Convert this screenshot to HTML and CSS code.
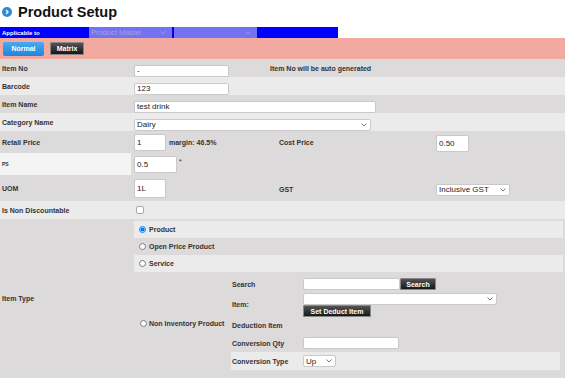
FILE: index.html
```html
<!DOCTYPE html>
<html lang="en">

<head>
    <meta charset="UTF-8">
    <title>Product Setup</title>
    <link rel="stylesheet" href="styles.css">
</head>

<body>
    <div class="page">
        <!-- title -->
        <h1 class="title">
            <svg class="title-icon" width="10" height="10" viewBox="0 0 10 10">
                <circle cx="5" cy="5" r="5" fill="#2d8ad6" />
                <path d="M4 3 L6 5 L4 7" fill="none" stroke="#fff" stroke-width="1.3" />
            </svg>
            Product Setup
        </h1>

        <!-- applicable bar -->
        <div class="applicable">
            <span class="applicable-label">Applicable to</span>
            <span class="select-wrap">
                <select class="app-select">
                    <option>Product Master</option>
                </select>
                <svg class="chevron light-chevron" width="6" height="4" viewBox="0 0 6 4"><path d="M0.5 0.5 L3 3 L5.5 0.5" fill="none" stroke="currentColor" stroke-width="0.8" /></svg>
            </span>
            <span class="select-wrap">
                <select class="app-select">
                    <option></option>
                </select>
                <svg class="chevron light-chevron" width="6" height="4" viewBox="0 0 6 4"><path d="M0.5 0.5 L3 3 L5.5 0.5" fill="none" stroke="currentColor" stroke-width="0.8" /></svg>
            </span>
        </div>

        <div class="tabs">
            <button class="btn btn-blue">Normal</button>
            <button class="btn btn-dark">Matrix</button>
        </div>

        <div class="form">
            <div class="row dark">
                <div class="label">Item No</div>
                <div class="value"><input class="field w95" value="-"></div>
                <div class="label note">Item No will be auto generated</div>
            </div>
            <div class="row light">
                <div class="label">Barcode</div>
                <div class="value"><input class="field w95" value="123"></div>
            </div>
            <div class="row dark">
                <div class="label">Item Name</div>
                <div class="value"><input class="field w242" value="test drink"></div>
            </div>
            <div class="row light">
                <div class="label">Category Name</div>
                <div class="value">
                    <span class="select-wrap">
                        <select class="field w237">
                            <option>Dairy</option>
                        </select>
                        <svg class="chevron" width="6" height="4" viewBox="0 0 6 4"><path d="M0.5 0.5 L3 3 L5.5 0.5" fill="none" stroke="currentColor" stroke-width="0.8" /></svg>
                    </span>
                </div>
            </div>

            <!-- price block -->
            <div class="price-block dark">
                <div class="price-row retail">
                    <div class="label">Retail Price</div>
                    <div class="price-value"><input class="field box w32" value="1"><span class="label margin">margin: 46.5%</span></div>
                    <div class="label side-label">Cost Price</div>
                    <div><input class="field box w33" value="0.50"></div>
                </div>
                <div class="price-row ps">
                    <div class="label ps-label">PS</div>
                    <div class="price-value"><input class="field box w43 h17" value="0.5"><span class="star">*</span></div>
                </div>
                <div class="price-row uom">
                    <div class="label">UOM</div>
                    <div class="price-value"><input class="field box w32 h19" value="1L"></div>
                    <div class="label side-label">GST</div>
                    <div class="gst">
                        <span class="select-wrap">
                            <select class="field w74">
                                <option>Inclusive GST</option>
                            </select>
                            <svg class="chevron" width="6" height="4" viewBox="0 0 6 4"><path d="M0.5 0.5 L3 3 L5.5 0.5" fill="none" stroke="currentColor" stroke-width="0.8" /></svg>
                        </span>
                    </div>
                </div>
            </div>

            <div class="row light">
                <div class="label">Is Non Discountable</div>
                <div class="value"><span class="checkbox"></span></div>
            </div>

            <!-- item type -->
            <div class="type-block dark">
                <div class="label type-label">Item Type</div>
                <div class="type-options">
                    <label class="option light"><input type="radio" name="type" checked><span class="label">Product</span></label>
                    <label class="option"><input type="radio" name="type"><span class="label">Open Price Product</span></label>
                    <label class="option light"><input type="radio" name="type"><span class="label">Service</span></label>
                    <div class="non-inventory">
                        <label class="non-inv-label"><input type="radio" name="type"><span class="label">Non Inventory Product</span></label>
                        <div class="deduct">
                            <div class="deduct-row search-row">
                                <div class="label deduct-label">Search</div>
                                <div class="deduct-value"><input class="field w97"><button class="btn btn-dark btn-search">Search</button></div>
                            </div>
                            <div class="deduct-row item-row">
                                <div class="label deduct-label">Item:</div>
                                <div class="deduct-value stack">
                                    <span class="select-wrap">
                                        <select class="field w194">
                                            <option></option>
                                        </select>
                                        <svg class="chevron" width="6" height="4" viewBox="0 0 6 4"><path d="M0.5 0.5 L3 3 L5.5 0.5" fill="none" stroke="currentColor" stroke-width="0.8" /></svg>
                                    </span>
                                    <button class="btn btn-dark btn-set">Set Deduct Item</button>
                                </div>
                            </div>
                            <div class="deduct-row">
                                <div class="label deduct-label">Deduction Item</div>
                            </div>
                            <div class="deduct-row">
                                <div class="label deduct-label">Conversion Qty</div>
                                <div class="deduct-value"><input class="field w96"></div>
                            </div>
                            <div class="deduct-row light">
                                <div class="label deduct-label">Conversion Type</div>
                                <div class="deduct-value">
                                    <span class="select-wrap">
                                        <select class="field w33">
                                            <option>Up</option>
                                        </select>
                                        <svg class="chevron" width="6" height="4" viewBox="0 0 6 4"><path d="M0.5 0.5 L3 3 L5.5 0.5" fill="none" stroke="currentColor" stroke-width="0.8" /></svg>
                                    </span>
                                </div>
                            </div>
                        </div>
                    </div>
                </div>
            </div>
        </div>
    </div>
</body>

</html>
```

FILE: styles.css
```css
:root {
    --row-dark: #dcdada;
    --row-light: #ebebeb;
    --label: #333333;
    --pink: #f2a9a0;
    --blue: #0000ff;
}

* {
    margin: 0;
    padding: 0;
    box-sizing: border-box;
    font-family: 'Liberation Sans', Arial, sans-serif;
}

body {
    background: #ffffff;
}

.page {
    width: 565px;
}

/* title */
.title {
    height: 27px;
    display: flex;
    align-items: center;
    gap: 6px;
    padding-left: 2px;
    padding-bottom: 3px;
    font-size: 14.5px;
    font-weight: bold;
    color: #111;
}

.title-icon {
    flex: none;
}

/* applicable bar */
.applicable {
    width: 338px;
    height: 11px;
    background: var(--blue);
    display: flex;
    align-items: center;
}

.applicable-label {
    width: 89px;
    padding-left: 2px;
    font-size: 6px;
    font-weight: bold;
    color: #fff;
}

.applicable .select-wrap {
    margin-right: 2px;
}

.app-select {
    appearance: none;
    width: 83px;
    height: 11px;
    border: none;
    background: #7373f2;
    color: #a2a2dc;
    font-size: 7.5px;
    padding-left: 2px;
}

/* selects */
.select-wrap {
    position: relative;
    display: inline-flex;
}

select {
    appearance: none;
}

.chevron {
    position: absolute;
    right: 4px;
    top: 50%;
    margin-top: -2px;
    color: #555;
    pointer-events: none;
}

.light-chevron {
    color: #a8a8e4;
    right: 6px;
}

/* tabs */
.tabs {
    height: 21px;
    background: var(--pink);
    display: flex;
    align-items: center;
    gap: 6px;
    padding-left: 3px;
}

.btn {
    border: none;
    border-radius: 2px;
    color: #fff;
    font-size: 7px;
    font-weight: bold;
    cursor: pointer;
}

.btn-blue {
    width: 41px;
    height: 14px;
    background: linear-gradient(#4aa9f2, #1c86df);
}

.btn-dark {
    background: linear-gradient(#5a5a5a, #111);
    box-shadow: 0 0 0 1px #888 inset;
}

.tabs .btn-dark {
    width: 34px;
    height: 13px;
}

/* form rows */
.dark {
    background: var(--row-dark);
}

.light {
    background: var(--row-light);
}

.label {
    font-size: 7px;
    font-weight: bold;
    color: var(--label);
}

.row {
    height: 18px;
    display: flex;
    align-items: center;
}

.row > .label {
    width: 134px;
    padding-left: 2px;
}

.value {
    width: 134px;
}

.field {
    height: 12px;
    border: 1px solid #c9c9c9;
    border-radius: 2px;
    background: #fff;
    padding: 0 2px;
    font-size: 8px;
    color: #222;
}

.w95 { width: 95px; }
.w242 { width: 242px; }
.w237 { width: 237px; }
.w32 { width: 32px; }
.w33 { width: 33px; }
.w43 { width: 43px; }
.w74 { width: 74px; }
.w96 { width: 96px; }
.w97 { width: 97px; }
.w194 { width: 194px; }

.box {
    height: 17px;
}

.h17 { height: 17px; }
.h19 { height: 19px; }

/* price block */
.price-row {
    display: flex;
    align-items: center;
}

.price-row > .label:first-child {
    width: 131px;
    padding-left: 2px;
    align-self: stretch;
    display: flex;
    align-items: center;
}

.retail {
    height: 22px;
}

.ps {
    height: 22px;
}

.ps-label {
    background: #f5f4f4;
    font-size: 5px;
}

.uom {
    height: 26px;
}

.price-value {
    width: 145px;
    margin-left: 3px;
    display: flex;
    align-items: center;
}

.margin {
    margin-left: 3px;
}

.star {
    font-size: 7px;
    color: #333;
    margin-left: 2px;
    align-self: flex-start;
    margin-top: 2px;
}

.side-label {
    width: 157px;
}

.uom .side-label {
    padding-top: 3px;
}

.gst {
    align-self: flex-start;
    padding-top: 3px;
}

.checkbox {
    display: block;
    width: 8px;
    height: 8px;
    margin-left: 2px;
    border: 1px solid #aaa;
    border-radius: 2px;
    background: #fff;
}

/* item type */
.type-block {
    height: 159px;
    display: flex;
    align-items: center;
}

.type-label {
    width: 134px;
    padding-left: 2px;
}

.type-options {
    width: 429px;
    align-self: stretch;
    padding-top: 2px;
    display: flex;
    flex-direction: column;
}

.option {
    height: 17px;
    display: flex;
    align-items: center;
    gap: 3px;
    padding-left: 5px;
}

input[type="radio"] {
    width: 7px;
    height: 7px;
    margin: 0;
    flex: none;
}

.non-inventory {
    flex: 1;
    display: flex;
    align-items: center;
}

.non-inv-label {
    width: 97px;
    display: flex;
    align-items: center;
    gap: 2px;
    padding-left: 6px;
    margin-top: -3px;
}

.deduct {
    width: 329px;
    align-self: stretch;
    padding-top: 4px;
}

.deduct-row {
    height: 17px;
    display: flex;
    align-items: center;
}

.search-row {
    height: 16px;
}

.item-row {
    height: 25px;
}

.deduct-row + .deduct-row + .deduct-row + .deduct-row {
    height: 18px;
}

.deduct-label {
    width: 72px;
    padding-left: 1px;
}

.deduct-value {
    display: flex;
    align-items: center;
}

.stack {
    flex-direction: column;
    align-items: flex-start;
    padding-top: 1px;
}

.btn-search {
    width: 36px;
    height: 12px;
}

.btn-set {
    width: 68px;
    height: 12px;
}
```
